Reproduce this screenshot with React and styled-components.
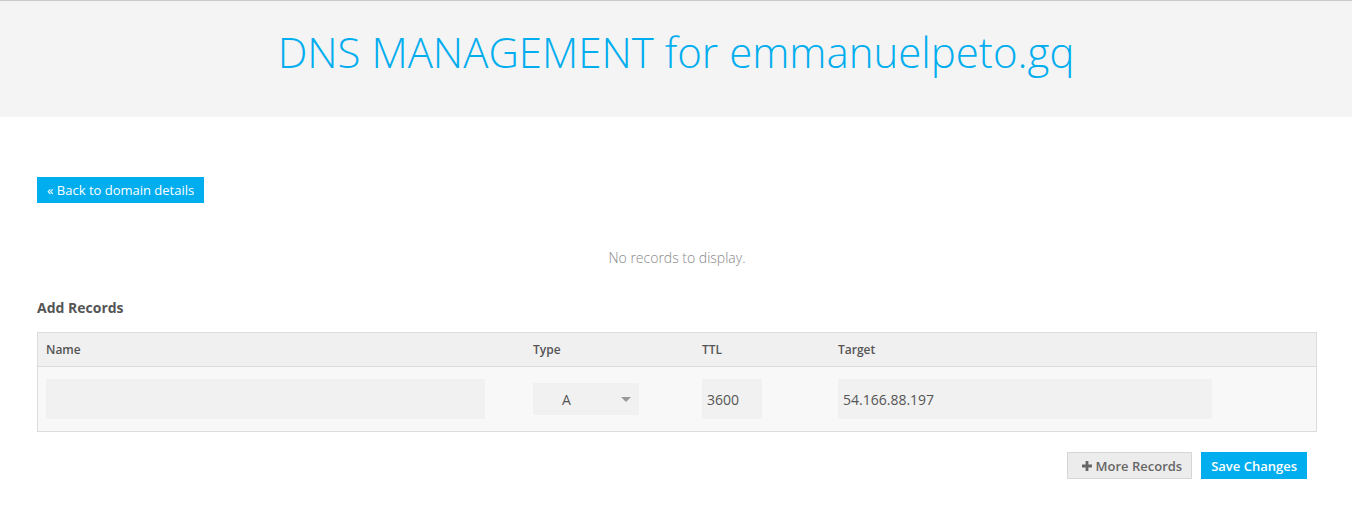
import React from "react";
import styled, { createGlobalStyle } from "styled-components";

const GlobalStyle = createGlobalStyle`
    body {
        margin: 0;
        background: #fff;
        font-family: "Open Sans", "Liberation Sans", sans-serif;
        color: #555;
    }
`;

export default function App() {
    return (
        <>
            <GlobalStyle />
            <Header>
                <Title>DNS MANAGEMENT for emmanuelpeto.gq</Title>
            </Header>
            <Main>
                <BackButton>« Back to domain details</BackButton>
                <Empty>No records to display.</Empty>
                <SectionTitle>Add Records</SectionTitle>
                <Table>
                    <HeadRow>
                        <HeadCell>Name</HeadCell>
                        <HeadCell>Type</HeadCell>
                        <HeadCell>TTL</HeadCell>
                        <HeadCell>Target</HeadCell>
                    </HeadRow>
                    <BodyRow>
                        <Cell>
                            <Input width={439} />
                        </Cell>
                        <Cell>
                            <Select>
                                <span>A</span>
                                <Caret />
                            </Select>
                        </Cell>
                        <Cell>
                            <Input width={60}>3600</Input>
                        </Cell>
                        <Cell>
                            <Input width={374}>54.166.88.197</Input>
                        </Cell>
                    </BodyRow>
                </Table>
                <Actions>
                    <GreyButton>
                        <PlusIcon viewBox="0 0 10 10">
                            <path d="M3.6 0h2.8v3.6H10v2.8H6.4V10H3.6V6.4H0V3.6h3.6z" fill="#666" />
                        </PlusIcon>
                        More Records
                    </GreyButton>
                    <BlueButton>Save Changes</BlueButton>
                </Actions>
            </Main>
        </>
    );
}

const Header = styled.header`
    border-top: 1px solid #c9c9c9;
    background: #f4f4f4;
    height: 116px;
    display: flex;
    justify-content: center;
    align-items: center;
`;
const Title = styled.h1`
    margin: 0 0 15px 0;
    font-size: 42px;
    font-weight: 300;
    color: #00adef;
`;
const Main = styled.main`
    padding: 60px 35px 0 37px;
    display: flex;
    flex-direction: column;
    align-items: flex-start;
`;
const BackButton = styled.button`
    border: none;
    background: #00adef;
    color: #fff;
    font-family: inherit;
    font-size: 13px;
    height: 26px;
    padding: 0 10px;
`;
const Empty = styled.p`
    align-self: stretch;
    text-align: center;
    margin: 45px 0 0 0;
    font-size: 14px;
    font-weight: 300;
    color: #888;
`;
const SectionTitle = styled.h3`
    margin: 31px 0 0 0;
    font-size: 14px;
    font-weight: 700;
    color: #555;
`;
const Table = styled.div`
    align-self: stretch;
    margin-top: 15px;
    border: 1px solid #dcdcdc;
`;
const columns = "487px 169px 136px 1fr";
const HeadRow = styled.div`
    display: grid;
    grid-template-columns: ${columns};
    height: 33px;
    background: #f0f0f0;
    border-bottom: 1px solid #dcdcdc;
`;
const HeadCell = styled.div`
    display: flex;
    align-items: center;
    padding: 0 8px;
    font-size: 12px;
    font-weight: 600;
    color: #555;
`;
const BodyRow = styled.div`
    display: grid;
    grid-template-columns: ${columns};
    height: 64px;
    background: #f8f8f8;
`;
const Cell = styled.div`
    display: flex;
    align-items: center;
    padding: 0 8px;
`;
const Input = styled.div`
    width: ${(p) => p.width}px;
    height: 40px;
    background: #f1f1f1;
    display: flex;
    align-items: center;
    padding-left: 5px;
    box-sizing: border-box;
    font-size: 14px;
    color: #555;
`;
const Select = styled.div`
    width: 106px;
    height: 32px;
    background: #f1f1f1;
    display: flex;
    align-items: center;
    justify-content: space-between;
    padding: 0 8px 0 29px;
    box-sizing: border-box;
    font-size: 14px;
    color: #555;
`;
const Caret = styled.span`
    width: 0;
    height: 0;
    border-left: 5px solid transparent;
    border-right: 5px solid transparent;
    border-top: 5px solid #999;
`;
const Actions = styled.div`
    align-self: stretch;
    display: flex;
    justify-content: flex-end;
    gap: 9px;
    margin-top: 20px;
    padding-right: 10px;
`;
const BaseButton = styled.button`
    height: 27px;
    font-family: inherit;
    font-size: 13px;
    font-weight: 600;
    padding: 0 10px;
    display: flex;
    align-items: center;
`;
const GreyButton = styled(BaseButton)`
    background: #ececec;
    border: 1px solid #d6d6d6;
    color: #666;
    padding: 0 9px 0 14px;
    gap: 4px;
`;
const BlueButton = styled(BaseButton)`
    background: #00adef;
    border: none;
    color: #fff;
`;
const PlusIcon = styled.svg`
    width: 10px;
    height: 10px;
`;
